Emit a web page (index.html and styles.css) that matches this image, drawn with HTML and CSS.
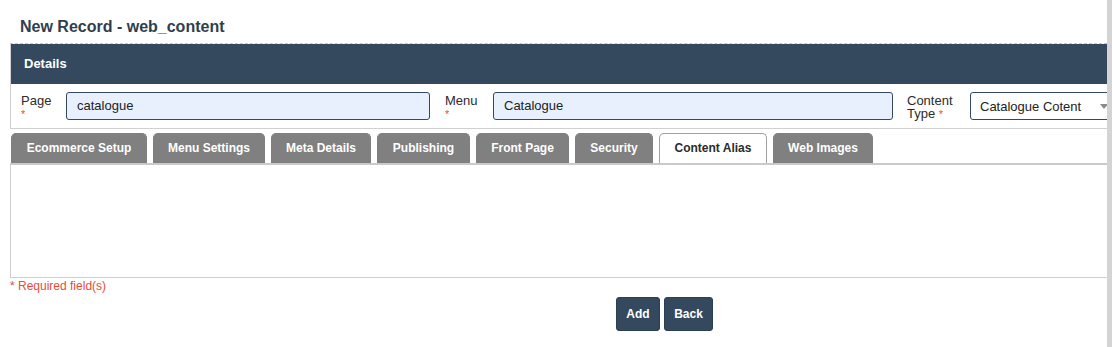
FILE: index.html
```html
<!DOCTYPE html>
<html lang="en">
<head>
  <meta charset="UTF-8" />
  <meta name="viewport" content="width=device-width, initial-scale=1.0">
  <title>New Record - web_content</title>
  <link rel="stylesheet" href="styles.css">
</head>
<body>
  <div class="page">
    <h1 class="page-title">New Record - web_content</h1>

    <div class="panel">
      <div class="panel-head">Details</div>
      <div class="fields">
        <div class="field">
          <label class="field-label lbl-page">Page<br><span class="req">*</span></label>
          <div class="input in-page">catalogue</div>
        </div>
        <div class="field">
          <label class="field-label lbl-menu">Menu<br><span class="req">*</span></label>
          <div class="input in-menu">Catalogue</div>
        </div>
        <div class="field">
          <label class="field-label lbl-type">Content<br>Type <span class="req">*</span></label>
          <div class="select">
            <span>Catalogue Cotent</span>
            <svg class="caret" width="8" height="5" viewBox="0 0 8 5"><path d="M0 0h8L4 5z" fill="#8a8a8a"/></svg>
          </div>
        </div>
      </div>
    </div>

    <div class="tabs">
      <div class="tab">Ecommerce Setup</div>
      <div class="tab">Menu Settings</div>
      <div class="tab">Meta Details</div>
      <div class="tab">Publishing</div>
      <div class="tab">Front Page</div>
      <div class="tab">Security</div>
      <div class="tab active">Content Alias</div>
      <div class="tab">Web Images</div>
    </div>
    <div class="tab-body"></div>

    <div class="note">* Required field(s)</div>

    <div class="actions">
      <button class="btn btn-add">Add</button>
      <button class="btn btn-back">Back</button>
    </div>
  </div>
  <div class="edge"></div>
</body>
</html>
```

FILE: styles.css
```css
html, body {
  height: 100%;
  margin: 0;
  padding: 0;
  font-family: "Liberation Sans", Arial, sans-serif;
}
body {
  display: flex;
  background-color: #fff;
  color: #333;
  overflow: hidden;
}
.page {
  flex: 1;
  min-width: 0;
  padding: 0 0 0 10px;
  overflow: hidden;
}
.edge {
  width: 5px;
  background-color: #d4d4d4;
}
.page-title {
  margin: 0;
  padding: 17px 0 0 10px;
  height: 26px;
  font-size: 16px;
  line-height: 19px;
  color: #2f3e4e;
}
.panel {
  border-top: 1px dashed #c8c8c8;
  border-left: 1px solid #d0d0d0;
  border-bottom: 1px solid #d0d0d0;
  overflow: hidden;
}
.panel-head {
  background-color: #34495e;
  color: white;
  font-weight: bold;
  font-size: 13px;
  height: 40px;
  line-height: 40px;
  padding-left: 13px;
}
.fields {
  display: flex;
  padding: 8px 0 7px 10px;
}
.field {
  display: flex;
  margin-right: 15px;
}
.field:nth-child(2) {
  margin-right: 14px;
}
.field:last-child {
  margin-right: 0;
}
.field-label {
  font-size: 13px;
  line-height: 13px;
  padding-top: 2px;
  color: #2b2b2b;
}
.lbl-page { width: 45px; }
.lbl-menu { width: 48px; }
.lbl-type { width: 63px; }
.req {
  color: #e74c3c;
  font-size: 11px;
}
.input {
  height: 26px;
  line-height: 26px;
  border: 1px solid #34495e;
  border-radius: 3px;
  background-color: #e8f0fe;
  font-size: 13px;
  padding-left: 10px;
  color: #222;
  box-sizing: content-box;
}
.in-page { width: 352px; }
.in-menu { width: 388px; }
.select {
  width: 140px;
  height: 26px;
  border: 1px solid #34495e;
  border-radius: 3px;
  display: flex;
  align-items: center;
  justify-content: space-between;
  padding-left: 9px;
  font-size: 13px;
  color: #222;
  flex-shrink: 0;
}
.caret {
  margin-right: 12px;
}
.tabs {
  display: flex;
  gap: 6px;
  margin-top: 4px;
  padding-left: 1px;
}
.tab {
  box-sizing: border-box;
  height: 30px;
  line-height: 29px;
  text-align: center;
  background-color: #808080;
  border: 1px solid #808080;
  border-bottom: none;
  border-radius: 5px 5px 0 0;
  color: white;
  font-size: 12px;
  font-weight: bold;
  white-space: nowrap;
}
.tab:nth-child(1) { width: 136px; }
.tab:nth-child(2) { width: 112px; }
.tab:nth-child(3) { width: 100px; }
.tab:nth-child(4) { width: 93px; }
.tab:nth-child(5) { width: 93px; }
.tab:nth-child(6) { width: 78px; }
.tab:nth-child(7) { width: 108px; }
.tab:nth-child(8) { width: 100px; }
.tab.active {
  background-color: white;
  border-color: #a0a0a0;
  color: #2b2b2b;
}
.tab-body {
  height: 112px;
  border-top: 2px solid #cacaca;
  border-left: 1px solid #d0d0d0;
  border-bottom: 1px solid #d0d0d0;
}
.note {
  color: #e74c3c;
  font-size: 12px;
  line-height: 14px;
  margin-top: 1px;
}
.actions {
  display: flex;
  gap: 4px;
  padding-left: 606px;
  margin-top: 4px;
}
.btn {
  height: 34px;
  padding: 0;
  background-color: #34495e;
  color: white;
  border: 1px solid #2c3e50;
  border-radius: 3px;
  font-family: "Liberation Sans", Arial, sans-serif;
  font-size: 12px;
  font-weight: bold;
  cursor: pointer;
}
.btn-add { width: 44px; }
.btn-back { width: 49px; }
```
